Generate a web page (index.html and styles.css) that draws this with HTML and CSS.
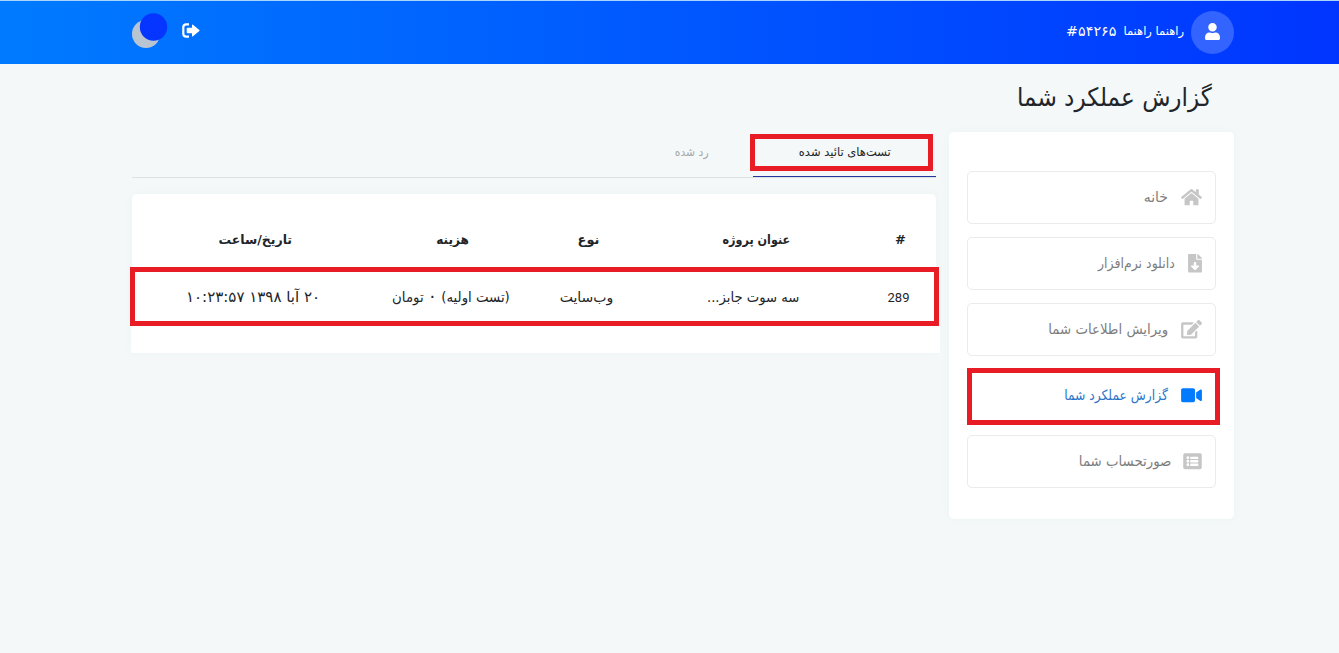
FILE: index.html
```html
<!DOCTYPE html>
<html lang="fa" dir="rtl">
<head>
<meta charset="utf-8">
<title>گزارش عملکرد شما</title>
<link rel="stylesheet" href="styles.css">
</head>
<body>
<header class="topbar">
  <div class="container topbar-inner">
    <div class="user">
      <span class="avatar"><svg viewBox="0 0 448 512" width="15" height="17"><path d="M224 256c70.700 0 128-57.300 128-128S294.700 0 224 0 96 57.300 96 128s57.300 128 128 128zm89.600 32h-16.700c-22.200 10.200-46.900 16-72.900 16s-50.600-5.800-72.900-16h-16.700C60.200 288 0 348.200 0 422.400V464c0 26.500 21.500 48 48 48h352c26.500 0 48-21.500 48-48v-41.600c0-74.200-60.200-134.400-134.400-134.400z"/></svg></span>
      <span class="user-name"><span>راهنما راهنما</span><span class="user-id">#۵۴۲۶۵</span></span>
    </div>
    <div class="actions">
      <svg class="logout" viewBox="0 0 18 15" width="18" height="15"><path d="M7 1.400H4.200Q1.300 1.400 1.300 4.300V10.700Q1.300 13.600 4.200 13.600H7" fill="none" stroke="#fff" stroke-width="2.200"/><path d="M5.500 4.800H10V2.200Q10 .9 11 1.800L17.300 6.900Q17.900 7.500 17.300 8.100L11 13.200Q10 14.100 10 12.800V10.200H5.500Q4.700 10.200 4.700 9.400V5.600Q4.700 4.800 5.500 4.800Z" fill="#fff"/></svg>
      <svg class="logo" viewBox="0 0 36 36" width="36" height="36"><circle cx="14" cy="21" r="14" fill="#b9c4d3"/><circle cx="21.500" cy="14" r="13.700" fill="#0535ff"/></svg>
    </div>
  </div>
</header>
<main class="container">
  <h1 class="title"><span class="t">گزارش عملکرد شما</span></h1>
  <div class="columns">
    <nav class="sidebar">
      <a class="item home"><svg viewBox="0 0 576 512" width="21" height="18.500"><path d="M280.370 148.260L96 300.110V464a16 16 0 0 0 16 16l112.060-.29a16 16 0 0 0 15.920-16V368a16 16 0 0 1 16-16h64a16 16 0 0 1 16 16v95.640a16 16 0 0 0 16 16.050L464 480a16 16 0 0 0 16-16V300L295.670 148.260a12.190 12.190 0 0 0-15.300 0zM571.600 251.470L488 182.560V44.050a12 12 0 0 0-12-12h-56a12 12 0 0 0-12 12v72.610L318.470 43a48 48 0 0 0-61 0L4.340 251.470a12 12 0 0 0-1.600 16.900l25.500 31A12 12 0 0 0 45.150 301l235.220-193.740a12.190 12.190 0 0 1 15.300 0L530.900 301a12 12 0 0 0 16.900-1.600l25.500-31a12 12 0 0 0-1.700-16.930z"/></svg><span class="t">خانه</span></a>
      <a class="item download"><svg viewBox="0 0 384 512" width="14" height="18.500"><path d="M224 136V0H24C10.700 0 0 10.700 0 24v464c0 13.300 10.700 24 24 24h336c13.300 0 24-10.700 24-24V160H248c-13.200 0-24-10.800-24-24zm76.450 211.360l-96.420 95.700c-6.650 6.610-17.390 6.610-24.040 0l-96.420-95.700C73.420 337.290 80.540 320 94.820 320H160v-80c0-8.840 7.160-16 16-16h32c8.840 0 16 7.160 16 16v80h65.180c14.280 0 21.400 17.290 11.270 27.360zM377 105L279.100 7c-4.500-4.500-10.600-7-17-7H256v128h128v-6.100c0-6.300-2.500-12.400-7-16.900z"/></svg><span class="t">دانلود نرم‌افزار</span></a>
      <a class="item edit"><svg viewBox="0 0 576 512" width="21" height="18.500"><path d="M402.600 83.200l90.200 90.200c3.800 3.800 3.800 10 0 13.800L274.400 405.600l-92.800 10.300c-12.400 1.400-22.900-9.100-21.500-21.500l10.300-92.800L388.800 83.200c3.800-3.800 10-3.800 13.800 0zm162-22.900l-48.800-48.800c-15.200-15.200-39.900-15.200-55.200 0l-35.400 35.400c-3.800 3.800-3.800 10 0 13.800l90.200 90.200c3.800 3.800 10 3.800 13.800 0l35.400-35.400c15.200-15.300 15.200-40 0-55.200zM384 346.200V448H64V128h229.800c3.200 0 6.200-1.300 8.500-3.500l40-40c7.600-7.600 2.200-20.500-8.500-20.500H48C21.500 64 0 85.500 0 112v352c0 26.500 21.500 48 48 48h352c26.500 0 48-21.500 48-48V306.200c0-10.700-12.900-16-20.500-8.500l-40 40c-2.200 2.300-3.500 5.300-3.500 8.500z"/></svg><span class="t">ویرایش اطلاعات شما</span></a>
      <a class="item report active"><svg viewBox="0 0 576 512" width="21" height="18.500"><path d="M336.200 64H47.800C21.400 64 0 85.400 0 111.800v288.400C0 426.600 21.400 448 47.800 448h288.400c26.400 0 47.800-21.400 47.800-47.800V111.800c0-26.400-21.400-47.800-47.800-47.800zm189.400 37.700L416 177.300v157.400l109.600 75.500c21.200 14.600 50.400-.3 50.400-25.800V127.500c0-25.400-29.100-40.400-50.400-25.800z"/></svg><span class="t">گزارش عملکرد شما</span></a>
      <a class="item bill"><svg viewBox="0 0 512 512" width="19" height="18.500"><path fill-rule="evenodd" d="M48 32H464a48 48 0 0 1 48 48V432a48 48 0 0 1-48 48H48a48 48 0 0 1-48-48V80a48 48 0 0 1 48-48zM128 120a40 40 0 1 0 0 80 40 40 0 1 0 0-80zM128 216a40 40 0 1 0 0 80 40 40 0 1 0 0-80zM128 312a40 40 0 1 0 0 80 40 40 0 1 0 0-80zM204 128H404a12 12 0 0 1 12 12V180a12 12 0 0 1-12 12H204a12 12 0 0 1-12-12V140a12 12 0 0 1 12-12zM204 224H404a12 12 0 0 1 12 12V276a12 12 0 0 1-12 12H204a12 12 0 0 1-12-12V236a12 12 0 0 1 12-12zM204 320H404a12 12 0 0 1 12 12V372a12 12 0 0 1-12 12H204a12 12 0 0 1-12-12V332a12 12 0 0 1 12-12z"/></svg><span class="t">صورتحساب شما</span></a>
    </nav>
    <section class="content">
      <div class="tabs">
        <a class="tab current"><span class="t">تست‌های تائید شده</span></a>
        <a class="tab rejected"><span class="t">رد شده</span></a>
      </div>
      <div class="card">
        <div class="row head">
          <span>#</span><span class="h-title">عنوان پروژه</span><span class="h-type">نوع</span><span class="h-cost">هزینه</span><span class="h-date">تاریخ/ساعت</span>
        </div>
        <div class="row data">
          <span class="num">289</span><span class="c-title">سه سوت جابز...</span><span class="c-type">وب‌سایت</span><span class="c-cost">(تست اولیه) <span class="zero">۰</span> تومان</span><span class="c-date">۲۰ آبا ۱۳۹۸ ۱۰:۲۳:۵۷</span>
        </div>
        <div class="card-foot"></div>
      </div>
    </section>
  </div>
</main>
</body>
</html>
```
FILE: styles.css
```css
* { box-sizing: border-box; }
body {
  margin: 0;
  min-height: 653px;
  background: #f4f8f9;
  color: #212529;
  font-family: "DejaVu Sans", sans-serif;
  font-size: 14px;
  overflow: hidden;
}
.container { width: 1102px; margin-right: 105px; }
.topbar {
  height: 64px;
  border-top: 1px solid #a9d4fb;
  background: linear-gradient(to right, #007bff, #0035ff);
  color: #fff;
}
.topbar-inner { display: flex; justify-content: space-between; align-items: center; height: 63px; }
.user, .actions { display: flex; align-items: center; }
.user { gap: 7px; }
.avatar {
  display: flex; align-items: center; justify-content: center;
  width: 43px; height: 43px; border-radius: 50%;
  background: #3364ff;
}
.avatar svg { fill: #fff; margin-bottom: 3px; }
.user-name { display: flex; align-items: center; gap: 7px; height: 16px; font-size: 11.5px; margin-bottom: 3px; white-space: nowrap; }
.user-id { font-size: 14.3px; }
.actions { gap: 14px; margin-bottom: 4px; }
.title {
  margin: 0; height: 68px; padding: 12px 22px 0 0;
  font-size: 25.5px; font-weight: 400; line-height: 42px; white-space: nowrap;
}
.t { display: inline-block; transform-origin: right center; }
.title .t { transform: scaleX(.907); }
.columns { display: flex; gap: 13px; align-items: flex-start; }
.sidebar {
  display: flex; flex-direction: column; gap: 13px;
  width: 285px; height: 387px; padding: 39px 18px;
  border-radius: 5px; background: #fff;
  box-shadow: 0 0 8px rgba(60, 90, 110, .04);
}
.item {
  display: flex; align-items: center; gap: 13px;
  height: 53px; flex: none; padding: 0 13px;
  border: 1px solid #ebebeb; border-radius: 5px;
  color: #7d7d7d; white-space: nowrap;
}
.item svg { fill: #c6c6c6; }
.item .t { padding-bottom: 2px; }
.item.download .t { transform: scaleX(.895); }
.item.edit .t { transform: scaleX(.95); }
.item.report .t { transform: scaleX(.88); }
.item.bill { gap: 12px; }
.item.bill .t { transform: scaleX(.95); }
.item.active {
  height: 57px; width: 253px; margin: -1px -4px -3px 0;
  border: 5px solid #e81c24; border-radius: 0;
  color: #2b75c9;
}
.item.active > * { margin-top: -2px; }
.item.active svg { fill: #007bff; }
.content { width: 804px; }
.tabs { display: flex; height: 46px; border-bottom: 1px solid #dde1e4; font-size: 12px; white-space: nowrap; }
.tab { display: flex; align-items: center; justify-content: center; height: 41px; }
.tab .t { padding-bottom: 2px; }
.tab.current {
  position: relative;
  width: 183px; height: 37px; margin: 2px 3px 0 0;
  border: 5px solid #e81c24; color: #212529;
}
.tab.current .t { transform: translateX(1px) scaleX(.96); }
.tab.current::after { content: ""; position: absolute; top: 37px; right: -8px; width: 183px; height: 1px; background: #2339a0; }
.tab.rejected { width: 120px; color: #a5a8aa; }
.tab.rejected .t { transform: scaleX(.9); }
.card {
  height: 159px; margin-top: 16px; border-radius: 5px 5px 0 0; background: #fff;
  box-shadow: 0 0 8px rgba(60, 90, 110, .04);
}
.row { display: grid; grid-template-columns: 71px 217px 121px 149px 246px; align-items: center; text-align: center; white-space: nowrap; }
.row > span { justify-self: center; }
.head { height: 73px; padding-top: 18px; font-weight: 700; font-size: 13px; }
.h-title { transform: scaleX(.86); }
.h-type { transform: translateX(1px); }
.h-cost { transform: scaleX(.93); }
.h-date { transform: scaleX(.96); }
.data { height: 59px; width: 809px; margin-right: -3px; border: 5px solid #e81c24; }
.num { font-family: Roboto, sans-serif; font-size: 13px; padding-top: 2px; }
.c-title { transform: translate(-1px, 0) scaleX(.94); }
.c-type { transform: translateX(1px); }
.c-cost { transform: scaleX(.95); }
.zero { font-size: 18px; line-height: 14px; }
.c-date { font-size: 15px; }
.card-foot { height: 27px; width: 809px; margin-right: -4px; background: #fff; }
```
